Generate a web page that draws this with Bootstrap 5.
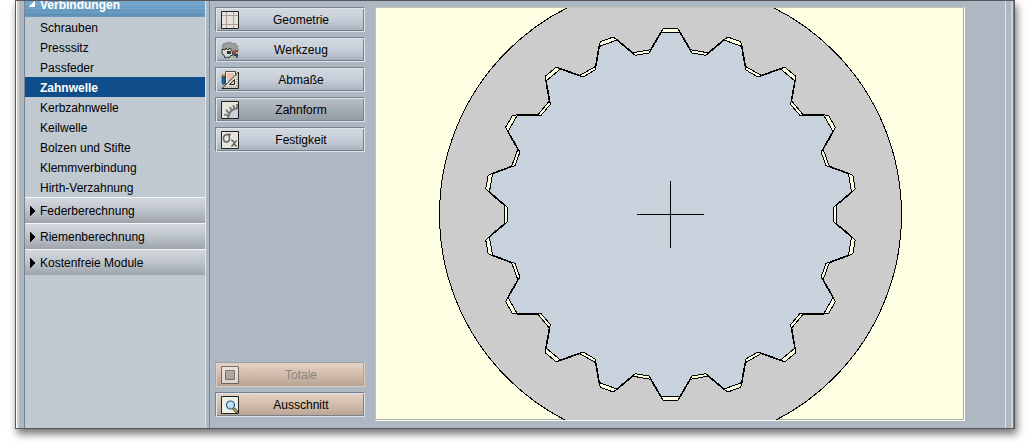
<!DOCTYPE html>
<html lang="de">
<head>
<meta charset="utf-8">
<meta name="viewport" content="width=device-width, initial-scale=1">
<title>Zahnwelle – Zahnform</title>
<link href="https://cdn.jsdelivr.net/npm/bootstrap@5.3.0/dist/css/bootstrap.min.css" rel="stylesheet">
<style>
body{background:#fff;font-family:"Liberation Sans",Arial,sans-serif;font-size:12px;line-height:16px;color:#000}
.app-window{margin:0 15px 15px;border:1px solid #55575c;background:#aeb8c3;box-shadow:2px 5px 8px rgba(0,0,0,.55)}
.edge-left{flex:0 0 8px;background:linear-gradient(90deg,#fff 1px,#d4d0c8 1px,#d4d0c8 3px,#aeb8c3 3px)}
.edge-right{flex:0 0 9px;border-left:1px solid #dfe5ec;background:linear-gradient(90deg,#aeb8c3 5px,#d4d0c8 5px,#d4d0c8 7px,#808080 7px)}
.side-menu{flex:0 0 182px;background:#c0c8d0;border-left:1px solid #78828e;border-right:1px solid #dde4ea}
.menu-link{height:20px;line-height:22px;padding-left:15px;color:#000;text-decoration:none}
.menu-link.active{background:#104e8b;color:#fff;font-weight:bold}
.menu-head{height:26px;padding:0 0 0 5px;border:0;border-top:1px solid #f4f6f8;background:linear-gradient(#d3d9de,#bdc3ca 50%,#9fa4ab);text-align:left;color:#000}
.menu-head svg{width:10px;height:10px;shape-rendering:crispEdges}
.menu-head.open{height:16px;padding:0 0 4px 2px;border:0;background:repeating-linear-gradient(#fff0 0 3px,#ffffff18 3px 4px),linear-gradient(#72a7cf,#5b8fb5);color:#fff;font-weight:bold}
.menu-head.open svg{margin-right:3px}
.tool-col{flex:0 0 155px;padding:6px 0 11px 5px;border-left:1px solid #7b8692;margin-left:3px}
.tool-btn{width:150px;height:25px;padding:0 1px 0 5px;border:1px solid #77818e;border-bottom-color:#dde3e9;border-right-color:#dde3e9;box-shadow:inset 1px 1px 0 #e0e5ea,inset -1px -1px 0 #77818e;background:linear-gradient(#d3d9e0,#c4cdd7 55%,#a8b0ba);color:#000}
.tool-btn.current{background:linear-gradient(#b9c0c8,#a4acb6 50%,#929aa5)}
.tool-btn.tan{background:linear-gradient(#e4d3c6,#d2bdad 50%,#b8a393)}
.tool-btn:disabled{border-color:#9aa0a6 #e4cdba #e6cbb2 #a7a7aa;box-shadow:inset 1px 1px 0 #decfc4,inset -1px -1px 0 #a9a29e;color:#8b8480}
.tool-btn:disabled svg{opacity:.6}
.tool-btn svg{width:18px;height:18px;flex:none}
.drawing{margin:6px 40px 7px 10px;background:#ffffe3;border:1px solid #b0b09c;border-color:#c4c5b9 #fff #fff #c4c5b9;box-shadow:inset -1px -1px 0 #b0b09c}
.drawing svg{width:100%;height:auto}
</style>
</head>
<body>
<main class="app-window d-flex">
  <div class="edge-left"></div>
  <nav class="side-menu d-flex flex-column" aria-label="Module">
    <button class="menu-head open d-flex align-items-end overflow-hidden"><svg viewBox="0 0 10 10" class="mb-1"><path d="M8 1v7H1z" fill="#fff"/></svg>Verbindungen</button>
    <a href="#" class="menu-link">Schrauben</a>
    <a href="#" class="menu-link">Presssitz</a>
    <a href="#" class="menu-link">Passfeder</a>
    <a href="#" class="menu-link active" aria-current="page">Zahnwelle</a>
    <a href="#" class="menu-link">Kerbzahnwelle</a>
    <a href="#" class="menu-link">Keilwelle</a>
    <a href="#" class="menu-link">Bolzen und Stifte</a>
    <a href="#" class="menu-link">Klemmverbindung</a>
    <a href="#" class="menu-link">Hirth-Verzahnung</a>
    <button class="menu-head d-flex align-items-center"><svg viewBox="0 0 10 10"><path d="M0 0l5 5-5 5z"/></svg>Federberechnung</button>
    <button class="menu-head d-flex align-items-center"><svg viewBox="0 0 10 10"><path d="M0 0l5 5-5 5z"/></svg>Riemenberechnung</button>
    <button class="menu-head d-flex align-items-center"><svg viewBox="0 0 10 10"><path d="M0 0l5 5-5 5z"/></svg>Kostenfreie Module</button>
  </nav>
  <div class="tool-col d-flex flex-column">
    <div class="d-grid" style="gap:5px">
      <button class="tool-btn d-flex align-items-center"><svg viewBox="0 0 18 18"><path fill="#e6e4da" stroke="#222" d="M.5.5h17v17H.5z"/><path stroke="#b39f9f" fill="none" d="M5.500 1v16M12.500 1v16M1 4.500h16M1 13.500h16"/></svg><span class="flex-fill">Geometrie</span></button>
      <button class="tool-btn d-flex align-items-center"><svg viewBox="0 0 18 18"><path d="M1 5l2-3 2 1 1-2 2 1 2-1 1 2 3-1 1 2 2 1-1 2 2 2-3 1-1 3-3-2H5L1 9l1-2z" fill="#9b9d9d" stroke="#6c6e6e" stroke-width=".6"/><path d="M1 8l3 1 1-2 2 2 2-2 2 3 1 4-3 1-1 2-2-1-2 1-1-3-2-1z" fill="#d9d9d6" stroke="#222" stroke-width=".9"/><path d="M6 10h4v3H6z" fill="#333"/><path d="M12 9l5 1v7h-4z" fill="#3c3a48"/><path d="M12 9h3v3h-3z" fill="#e34127"/><path d="M15 11h2v2h-2zM13 15h2v2h-2z" fill="#f0a92a"/><path d="M12 12h2v2h-2zM15 15h2v2h-2z" fill="#2168c0"/></svg><span class="flex-fill">Werkzeug</span></button>
      <button class="tool-btn d-flex align-items-center"><svg viewBox="0 0 18 18"><path d="M4.500.5h10v16h-10z" fill="#f6ead6" stroke="#5b4a40"/><path d="M6 3h7M6 5h7M6 7h5M6 9h3" stroke="#d19a90"/><path d="M17.500 1v16.500H1z" fill="#e2dfd2" stroke="#222"/><path d="M13.500 8.500v5h-5z" fill="#c7cfd6" stroke="#222"/><path d="M4 16h13M16 4v12" stroke="#777" stroke-dasharray="1 1"/><path d="M1 4h3v8l-1.500 2L1 12z" fill="#1768b5" stroke="#222" stroke-width=".6"/><path d="M1 3h3v2H1z" fill="#e0902c"/></svg><span class="flex-fill">Abmaße</span></button>
      <button class="tool-btn current d-flex align-items-center" aria-pressed="true"><svg viewBox="0 0 18 18"><path fill="#e6e5dc" stroke="#222" d="M.5.5h17v17H.5z"/><path d="M17 7Q8 8 7 17h10z" fill="#cdd2d8"/><path d="M17 7Q8 8 7 17" fill="none" stroke="#777" stroke-width="2"/><path d="M7 14.500l-4-1m5-1.500L5 9m5.500.5L9 6m4 2l-.5-4M16 7V3" stroke="#777" stroke-width="1.800"/></svg><span class="flex-fill">Zahnform</span></button>
      <button class="tool-btn d-flex align-items-center"><svg viewBox="0 0 18 18"><path fill="#e6e5dc" stroke="#222" d="M.5.5h17v17H.5z"/><path d="M10 3.500H5.500Q2.500 4 2.500 7.500T5.500 11 8.500 7.500 6.500 3.500M10 9.500q2-1 3 2.500 1 3.500 3 2.500M15.500 9.500l-5 6" fill="none" stroke="#626262" stroke-width="1.400"/></svg><span class="flex-fill">Festigkeit</span></button>
    </div>
    <div class="d-grid mt-auto" style="gap:5px">
      <button class="tool-btn tan d-flex align-items-center" disabled><svg viewBox="0 0 18 18"><path fill="#f2f2ee" stroke="#333" d="M.5.5h17v17H.5z"/><path d="M4.500 4.500h9v9h-9z" fill="#999" stroke="#444"/></svg><span class="flex-fill">Totale</span></button>
      <button class="tool-btn tan d-flex align-items-center"><svg viewBox="0 0 18 18"><path fill="#edf0e6" stroke="#222" d="M.5.5h17v17H.5z"/><path d="M12.500 12.500l4 4" stroke="#222" stroke-width="3"/><path d="M12.500 12.500l3.500 3.500" stroke="#e5b557" stroke-width="1.500"/><circle cx="9.500" cy="9" r="4" fill="#b9dcf5" stroke="#32627f" stroke-width="1.200"/><path d="M7.500 9l2-2" stroke="#fff"/></svg><span class="flex-fill">Ausschnitt</span></button>
    </div>
  </div>
  <section class="drawing flex-fill">
    <svg class="d-block" viewBox="0 0 588 412" shape-rendering="crispEdges" role="img" aria-label="Zahnform von Welle und Nabe">
      <g transform="translate(294.5 206.5)" stroke="#000" stroke-linejoin="round">
        <circle r="231" fill="#ccc"/>
        <path id="hub" fill="#ffffe3"/>
        <path id="shaft" fill="#c8d2dc"/>
        <path d="M-34 0H33M0-34V33" fill="none"/>
      </g>
    </svg>
  </section>
  <div class="edge-right"></div>
</main>
<script src="https://cdn.jsdelivr.net/npm/bootstrap@5.3.0/dist/js/bootstrap.bundle.min.js"></script>
<script>
// Each profile is one tooth, given as [angle in degrees, radius], repeated around the axis.
const teeth = 18;
function outline(profile) {
  const points = [];
  for (let i = 0; i < teeth; i++) {
    for (const [angle, radius] of profile) {
      const t = (i * 360 / teeth + angle) * Math.PI / 180;
      points.push((radius * Math.sin(t)).toFixed(2) + ' ' + (-radius * Math.cos(t)).toFixed(2));
    }
  }
  return 'M' + points.join('L') + 'Z';
}
document.getElementById('hub').setAttribute('d', outline([[-6.9,166],[-5.1,173.5],[-3.2,182],[-2.1,186.5],[2.1,186.5],[3.2,182],[5.1,173.5],[6.9,166]]));
document.getElementById('shaft').setAttribute('d', outline([[-7.5,163],[-6.7,166],[-4.8,173.5],[-2.9,182.5],[2.9,182.5],[4.8,173.5],[6.7,166],[7.5,163]]));
</script>
</body>
</html>
